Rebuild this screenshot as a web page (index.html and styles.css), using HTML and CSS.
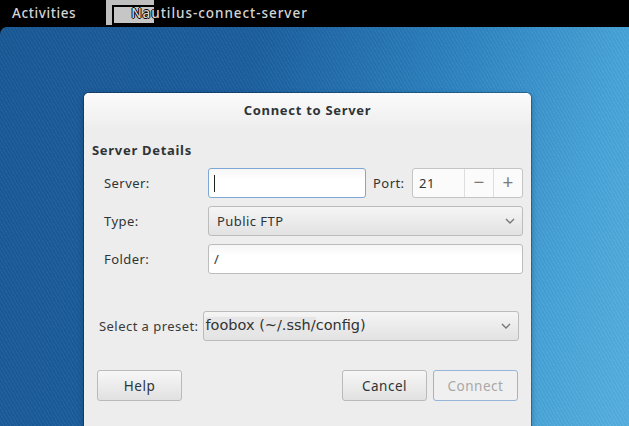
FILE: index.html
```html
<!DOCTYPE html>
<html lang="en">
<head>
    <meta charset="UTF-8">
    <meta name="viewport" content="width=device-width, initial-scale=1.0">
    <title>Connect to Server</title>
    <link rel="stylesheet" href="styles.css">
</head>
<body>
    <div class="topbar">
        <div class="activities">Activities</div>
        <div class="app-menu">
            <div class="app-icon"><div class="app-icon-inner"></div></div>
            <div class="app-name">Nautilus-connect-server</div>
        </div>
    </div>
    <div class="desktop">
        <div class="dialog">
            <div class="dialog-header">Connect to Server</div>
            <div class="section-title">Server Details</div>
            <div class="form">
                <label class="form-label">Server:</label>
                <div class="form-row">
                    <div class="entry entry-focus server-entry"><span class="caret"></span></div>
                    <span class="port-label">Port:</span>
                    <div class="spin">
                        <span class="spin-value">21</span>
                        <span class="spin-btn">&minus;</span>
                        <span class="spin-btn">+</span>
                    </div>
                </div>
                <label class="form-label">Type:</label>
                <div class="combo">
                    <span>Public FTP</span>
                    <svg class="chevron" width="10" height="6" viewBox="0 0 10 6"><path d="M1 1 L5 5 L9 1" fill="none" stroke="#777" stroke-width="1.4"/></svg>
                </div>
                <label class="form-label">Folder:</label>
                <div class="entry"><span class="entry-text">/</span></div>
            </div>
            <div class="preset-row">
                <span class="preset-label">Select a preset:</span>
                <div class="combo preset-combo">
                    <span class="preset-text"><span class="preset-hl">foobox (~/.ssh/</span>config)</span>
                    <svg class="chevron" width="10" height="6" viewBox="0 0 10 6"><path d="M1 1 L5 5 L9 1" fill="none" stroke="#777" stroke-width="1.4"/></svg>
                </div>
            </div>
            <div class="button-row">
                <button class="btn">Help</button>
                <div class="spacer"></div>
                <button class="btn">Cancel</button>
                <button class="btn btn-default" disabled>Connect</button>
            </div>
        </div>
    </div>
</body>
</html>
```
FILE: styles.css
```css
body {
    margin: 0;
    width: 629px;
    height: 426px;
    overflow: hidden;
    background: #000;
    font-family: "Noto Sans", "Open Sans", sans-serif;
    font-size: 13px;
    letter-spacing: 0.45px;
    color: #2e3436;
}
.topbar {
    height: 27px;
    background: #000;
    display: flex;
    align-items: flex-start;
    color: #d4d4d4;
    font-size: 13.5px;
    font-weight: 500;
}
.activities {
    margin-left: 12px;
    line-height: 27px;
    letter-spacing: 0.6px;
}
.app-menu {
    position: relative;
    margin-left: 30px;
    height: 27px;
}
.app-icon {
    width: 48px;
    height: 25px;
    padding: 5px 0 0 6px;
    box-sizing: border-box;
    background: #bfbfbf;
}
/* inner frame of the placeholder app icon */
.app-icon-inner {
    height: 20px;
    box-sizing: border-box;
    border: 2px solid #000;
    border-right: none;
    background: #c6c6c6;
}
.app-name {
    position: absolute;
    left: 25px;
    top: 0;
    line-height: 27px;
    white-space: nowrap;
    letter-spacing: 0.95px;
    text-shadow: 1px 0 0 #000, -1px 0 0 #000, 0 1px 0 #000, 0 -1px 0 #000;
}
.desktop {
    height: 399px;
    border-radius: 7px 0 0 0;
    overflow: hidden;
    padding: 66px 0 0 84px;
    box-sizing: border-box;
    background:
        repeating-linear-gradient(60deg, rgba(255,255,255,0.03) 0 1px, rgba(0,0,0,0.03) 1px 3px),
        linear-gradient(105deg, #1a5a98 0%, #1c5f9f 35%, #2c82c0 62%, #48a4d9 85%, #57b1e2 100%);
}
.dialog {
    width: 447px;
    height: 360px;
    background: #ededed;
    border-radius: 5px 5px 0 0;
    box-shadow: 0 0 0 1px rgba(0,0,0,0.25), 0 2px 6px rgba(0,0,0,0.3);
}
.dialog-header {
    height: 37px;
    line-height: 34px;
    text-align: center;
    font-weight: 700;
    letter-spacing: 0.7px;
    border-radius: 5px 5px 0 0;
    background: linear-gradient(#fbfbfb, #ededed);
}
.section-title {
    margin: 11px 0 0 8px;
    line-height: 18px;
    font-weight: 700;
    letter-spacing: 0.7px;
}
.form {
    margin: 9px 8px 0 20px;
    display: grid;
    grid-template-columns: 104px 1fr;
    row-gap: 8px;
    align-items: center;
}
.form-row {
    display: flex;
    align-items: center;
}
.entry {
    height: 30px;
    box-sizing: border-box;
    border: 1px solid #bcbcbc;
    border-radius: 3px;
    background: linear-gradient(#f6f6f6, #fff 40%);
    display: flex;
    align-items: center;
    padding-left: 5px;
}
.entry-focus {
    border-color: #7ea7d6;
}
.server-entry {
    width: 158px;
}
.caret {
    width: 1px;
    height: 17px;
    background: #222;
}
.port-label {
    margin-left: 7px;
}
.spin {
    margin-left: auto;
    width: 111px;
    height: 30px;
    box-sizing: border-box;
    border: 1px solid #c4c4c4;
    border-radius: 3px;
    background: #fbfbfb;
    display: flex;
    align-items: stretch;
}
.spin-value {
    flex: 1;
    padding-left: 6px;
    line-height: 28px;
}
.spin-btn {
    width: 28px;
    border-left: 1px solid #dedede;
    text-align: center;
    line-height: 26px;
    font-size: 19px;
    letter-spacing: 0;
    color: #7a7a7a;
}
.combo {
    height: 30px;
    box-sizing: border-box;
    border: 1px solid #bcbcbc;
    border-radius: 3px;
    background: linear-gradient(#f5f5f5, #e2e2e2);
    display: flex;
    align-items: center;
    justify-content: space-between;
    padding: 0 7px 0 8px;
}
.chevron {
    flex: none;
}
.preset-row {
    margin: 37px 12px 0 15px;
    display: flex;
    align-items: center;
}
.preset-label {
    margin-right: 4px;
    color: #3a3a3a;
}
.preset-combo {
    flex: 1;
    padding-left: 2px;
}
.preset-text {
    font-family: "DejaVu Sans", sans-serif;
    font-size: 14.5px;
    letter-spacing: 0;
    color: #333;
    margin-top: -3px;
}
.preset-hl {
    background: #e6e6e6;
}
.button-row {
    margin: 29px 13px 0 13px;
    display: flex;
    gap: 6px;
}
.spacer {
    flex: 1;
}
.btn {
    width: 85px;
    height: 31px;
    border: 1px solid #bababa;
    border-radius: 3px;
    background: linear-gradient(#f7f7f7, #e1e1e1);
    font-family: inherit;
    font-size: 13.5px;
    letter-spacing: 0.5px;
    color: #2e3436;
    padding: 0;
}
.btn-default {
    border-color: #97b5d9;
    background: #f0f0f0;
    color: #a8a8a8;
}
```
